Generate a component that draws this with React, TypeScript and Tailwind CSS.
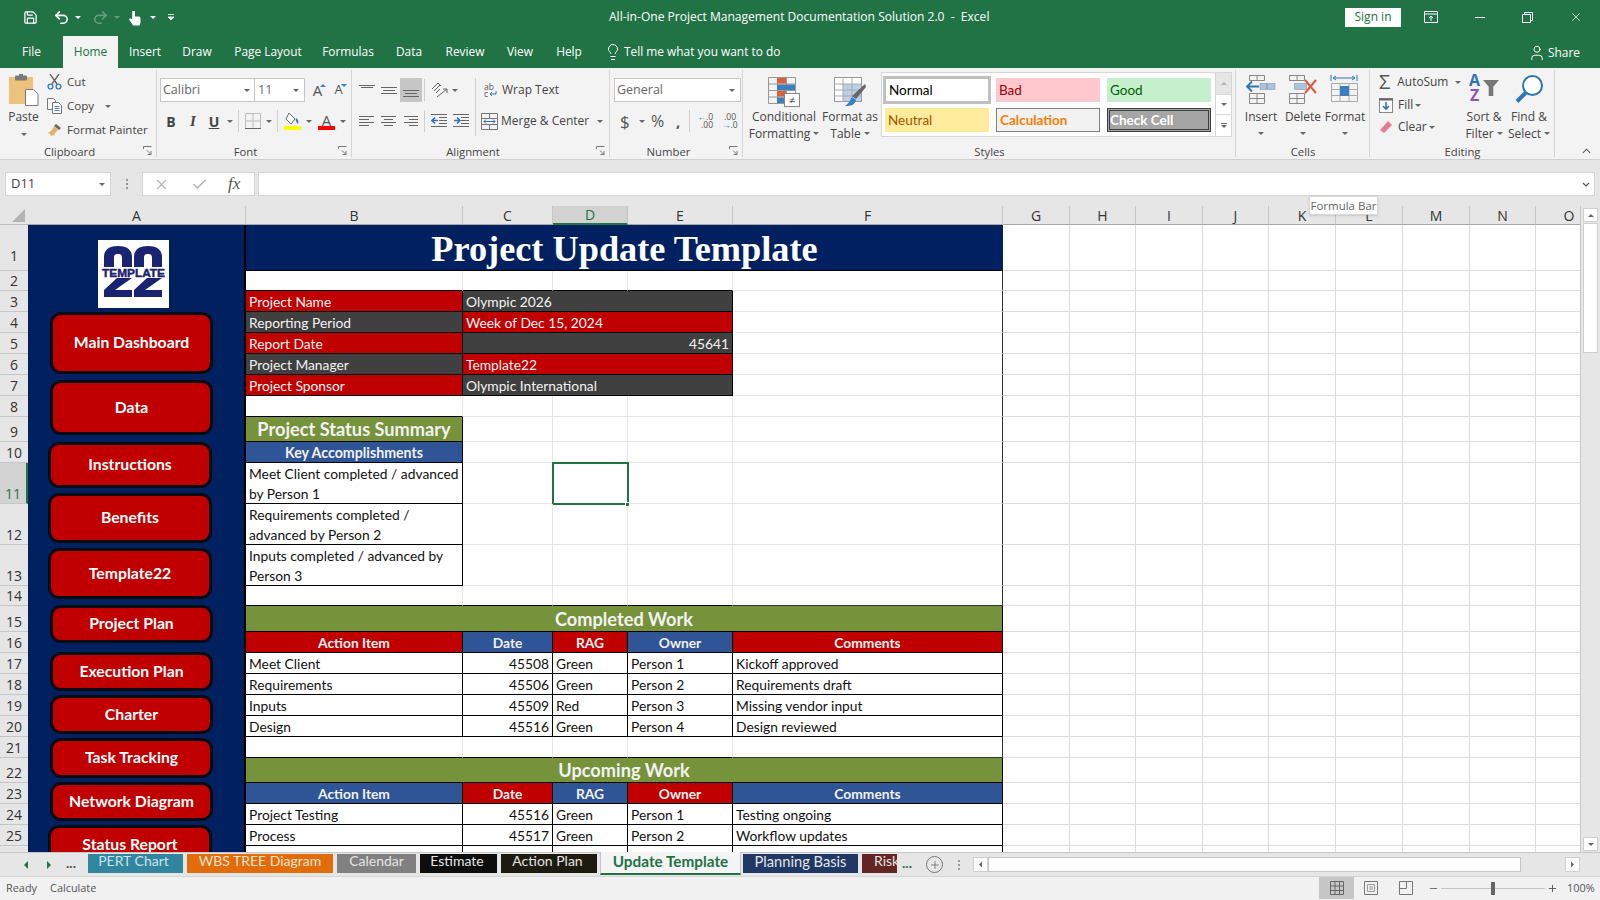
import { ReactNode } from "react";
import { Save, Undo2, Redo2, Lightbulb, User, X, Check, Minus, Plus } from "lucide-react";

const Caret = ({ className = "" }: { className?: string }) => (
  <svg viewBox="0 0 6 3" className={`w-[6px] h-[3px] shrink-0 ${className}`}>
    <path d="M0 0h6L3 3z" fill="#666" />
  </svg>
);

const Expander = () => (
  <svg viewBox="0 0 9 9" className="absolute right-[5px] bottom-[4px] w-[9px] h-[9px]">
    <path d="M.5 3V.5H8.5M8 8.5L4 4.5M8 5v3.5H4.5" fill="none" stroke="#777" strokeWidth="1" />
  </svg>
);

function Group({ label, w, children, labelPad = "" }: { label: string; w: string; children: ReactNode; labelPad?: string }) {
  return (
    <div className={`relative flex flex-col shrink-0 h-full ${w}`}>
      <div className="flex-1 flex min-h-0">{children}</div>
      <div className={`h-[16px] leading-[17px] text-center text-[11.3px] text-[#444] ${labelPad}`}>{label}</div>
      <div className="absolute right-0 top-[2px] bottom-[2px] w-px bg-[#d6d6d6]" />
      {["Clipboard", "Font", "Alignment", "Number"].includes(label) && <Expander />}
    </div>
  );
}

const Lines = ({ rows }: { rows: [number, number, number][] }) => (
  <svg viewBox="0 0 16 16" className="w-[16px] h-[16px]">
    {rows.map(([a, b, y]) => (
      <path key={y} d={`M${a} ${y + 0.5}H${b}`} stroke="#666" strokeWidth="1" />
    ))}
  </svg>
);

const IconBox = ({ children, className = "" }: { children: ReactNode; className?: string }) => (
  <div className={`w-[22px] h-[24px] flex items-center justify-center shrink-0 ${className}`}>{children}</div>
);

const VSep = ({ className = "" }: { className?: string }) => <div className={`w-px h-[22px] bg-[#d0d0d0] shrink-0 ${className}`} />;

function PasteIcon() {
  return (
    <svg viewBox="0 0 30 32" className="w-[30px] h-[32px]">
      <rect x="0" y="3" width="24" height="27" fill="#edc27c" />
      <rect x="6" y="1.5" width="12" height="5" rx="1" fill="#7a7a7a" />
      <rect x="10" y="0" width="4" height="3" fill="#7a7a7a" />
      <path d="M16.5 15.5h8l4.5 4.5v11.5h-12.5z" fill="#fff" stroke="#7a7a7a" />
    </svg>
  );
}

function CutIcon() {
  return (
    <svg viewBox="0 0 15 16" className="w-[15px] h-[16px]">
      <path d="M3 0l7 10M12 0L5 10" stroke="#666" strokeWidth="1.4" fill="none" />
      <circle cx="3.5" cy="12.5" r="2.4" fill="none" stroke="#3c7fc0" strokeWidth="1.4" />
      <circle cx="11.5" cy="12.5" r="2.4" fill="none" stroke="#3c7fc0" strokeWidth="1.4" />
    </svg>
  );
}

function CopyIcon() {
  return (
    <svg viewBox="0 0 15 16" className="w-[15px] h-[16px]">
      <path d="M.5.5h6l2 2v9h-8z" fill="#fff" stroke="#777" />
      <path d="M5.5 4.5h6l3 3v8h-9z" fill="#fff" stroke="#777" />
      <path d="M7.5 8.5h5M7.5 10.5h5M7.5 12.5h5" stroke="#4a86c5" />
    </svg>
  );
}

function PainterIcon() {
  return (
    <svg viewBox="0 0 15 15" className="w-[15px] h-[15px]">
      <path d="M9 1l5 4-2 2-5-4z" fill="#666" />
      <path d="M7 3l4 4-3 3-1 3-1-1-2 1-1-2-2-1 4-3z" fill="#e0b468" />
    </svg>
  );
}

function GrowA({ down }: { down?: boolean }) {
  return (
    <div className="relative w-[21px] h-[24px] flex items-center justify-center">
      <span className={`text-[#555] ${down ? "text-[13px]" : "text-[15px]"}`}>A</span>
      <svg viewBox="0 0 6 3" className="absolute right-[2px] top-[6px] w-[6px] h-[3px]">
        <path d={down ? "M0 0h6L3 3z" : "M0 3h6L3 0z"} fill="#3c7fc0" />
      </svg>
    </div>
  );
}

function Font() {
  return (
    <Group label="Font" w="w-[195px]" labelPad="pr-[18px]">
      <div className="flex flex-col pt-[10px] pl-[3px] gap-[7px] text-[#444]">
        <div className="flex items-center h-[24px]">
          <div className="w-[95px] h-[24px] bg-white border border-[#c6c6c6] flex items-center justify-between px-[2px] text-[12.5px] text-[#666]">
            Calibri
            <Caret className="mr-[2px]" />
          </div>
          <div className="w-[50px] h-[24px] bg-white border border-l-0 border-[#c6c6c6] flex items-center justify-between px-[3px] text-[12.5px] text-[#666]">
            11
            <Caret className="mr-[2px]" />
          </div>
          <div className="flex ml-[2px]">
            <GrowA />
            <GrowA down />
          </div>
        </div>
        <div className="flex items-center h-[24px]">
          <IconBox><span className="font-bold text-[14px]">B</span></IconBox>
          <IconBox><span className="italic font-['Liberation_Serif',serif] font-bold text-[15px]">I</span></IconBox>
          <IconBox className="-ml-[1px]"><span className="underline font-bold text-[14px]">U</span></IconBox>
          <Caret className="ml-[2px]" />
          <VSep className="ml-[5px]" />
          <svg viewBox="0 0 16 16" className="w-[16px] h-[16px] ml-[6px]">
            <path d="M.5.5h15v15H.5zM8 .5v15M.5 8h15" fill="none" stroke="#bdbdbd" />
            <path d="M0 15.5h16" stroke="#666" />
          </svg>
          <Caret className="ml-[5px]" />
          <VSep className="ml-[5px]" />
          <svg viewBox="0 0 17 18" className="w-[17px] h-[18px] ml-[6px]">
            <path d="M5 1l6 6-4 5-5-5z" fill="#fff" stroke="#666" />
            <path d="M12 6c2 1 3 3 2 6-1-1-3-3-2-6z" fill="#3c7fc0" />
            <rect x="0" y="14" width="17" height="4" fill="#ffff00" />
          </svg>
          <Caret className="ml-[5px]" />
          <div className="relative w-[17px] h-[18px] ml-[6px]">
            <span className="absolute left-0 right-0 -top-[3px] text-center text-[15px] text-[#555]">A</span>
            <div className="absolute left-0 right-0 bottom-0 h-[4px] bg-[#ff0000]" />
          </div>
          <Caret className="ml-[5px]" />
        </div>
      </div>
    </Group>
  );
}

function Alignment() {
  return (
    <Group label="Alignment" w="w-[258px]" labelPad="pr-[16px]">
      <div className="flex">
        <div className="w-[123px] flex flex-col pt-[10px] pl-[4px] gap-[7px]">
          <div className="flex items-center h-[24px]">
            <IconBox><Lines rows={[[0, 16, 3], [2, 14, 5]]} /></IconBox>
            <IconBox><Lines rows={[[0, 16, 5], [2, 14, 8], [0, 16, 11]]} /></IconBox>
            <IconBox className="bg-[#c6c6c6]"><Lines rows={[[0, 16, 8], [2, 14, 11], [0, 16, 14]]} /></IconBox>
            <VSep className="ml-[2px]" />
            <svg viewBox="0 0 18 18" className="w-[18px] h-[18px] ml-[6px]">
              <path d="M1 8l6-6 3 3M3 10l6-6M5 12l4-4" fill="none" stroke="#666" />
              <path d="M6 16l10-8M16 8h-4M16 8v4" fill="none" stroke="#666" />
            </svg>
            <Caret className="ml-[3px]" />
          </div>
          <div className="flex items-center h-[24px]">
            <IconBox><Lines rows={[[0, 15, 3], [0, 10, 6], [0, 15, 9], [0, 10, 12]]} /></IconBox>
            <IconBox><Lines rows={[[0, 15, 3], [3, 12, 6], [0, 15, 9], [3, 12, 12]]} /></IconBox>
            <IconBox><Lines rows={[[1, 15, 3], [6, 15, 6], [1, 15, 9], [6, 15, 12]]} /></IconBox>
            <VSep className="ml-[2px]" />
            <svg viewBox="0 0 16 16" className="w-[16px] h-[16px] ml-[6px]">
              <path d="M0 1.5h16M8 4.5h8M8 7.5h8M8 10.5h8M0 13.5h16" stroke="#666" />
              <path d="M7 7.5H1M4 4.5l-3 3 3 3" fill="none" stroke="#2e75b6" strokeWidth="1.6" />
            </svg>
            <svg viewBox="0 0 16 16" className="w-[16px] h-[16px] ml-[6px]">
              <path d="M0 1.5h16M8 4.5h8M8 7.5h8M8 10.5h8M0 13.5h16" stroke="#666" />
              <path d="M1 7.5h6M4 4.5l3 3-3 3" fill="none" stroke="#2e75b6" strokeWidth="1.6" />
            </svg>
          </div>
        </div>
        <VSep className="h-[58px] mt-[10px]" />
        <div className="flex flex-col pt-[10px] gap-[7px]">
          <div className="flex items-center h-[24px] pl-[8px] gap-[5px]">
            <svg viewBox="0 0 13 16" className="w-[13px] h-[16px]">
              <text x="0" y="7.500" fontSize="8.5" fill="#555">ab</text>
              <text x="0" y="15" fontSize="8.5" fill="#555">c</text>
              <path d="M12 9v3H6M8 10l-2 2 2 2" fill="none" stroke="#2e75b6" />
            </svg>
            <span className="text-[12px] text-[#444]">Wrap Text</span>
          </div>
          <div className="flex items-center h-[24px] pl-[5px]">
            <svg viewBox="0 0 17 17" className="w-[17px] h-[17px]">
              <path d="M.5.5h16v16H.5zM.5 5.5h16M.5 11.5h16M8.5.5v5M8.5 11.5v5" fill="none" stroke="#777" />
              <path d="M3 8.5h11M5 6.5l-2 2 2 2M12 6.5l2 2-2 2" fill="none" stroke="#2e75b6" />
            </svg>
            <span className="text-[12px] text-[#444] ml-[3px]">Merge &amp; Center</span>
            <Caret className="ml-[8px]" />
          </div>
        </div>
      </div>
    </Group>
  );
}

function NumberGroup() {
  return (
    <Group label="Number" w="w-[133px]" labelPad="pr-[16px]">
      <div className="flex flex-col pt-[10px] pl-[4px] gap-[7px]">
        <div className="w-[127px] h-[24px] bg-white border border-[#c6c6c6] flex items-center justify-between px-[2px] text-[12.5px] text-[#666]">
          General
          <Caret className="mr-[3px]" />
        </div>
        <div className="flex items-center h-[24px] text-[#555]">
          <span className="ml-[6px] w-[12px] text-[17px] leading-none">$</span>
          <Caret className="ml-[7px]" />
          <span className="ml-[6px] w-[17px] text-[16px] leading-none">%</span>
          <span className="ml-[8px] w-[8px] font-bold text-[15px] leading-none">,</span>
          <VSep className="ml-[5px]" />
          <div className="ml-[7px] w-[16px] leading-[8px] text-[8.5px] text-right">
            <span className="text-[#2e75b6]">←</span>.0
            <br />
            .00
          </div>
          <div className="ml-[9px] w-[14px] leading-[8px] text-[8.5px] text-right">
            .00
            <br />
            <span className="text-[#2e75b6]">→</span>.0
          </div>
        </div>
      </div>
    </Group>
  );
}

function CondIcon() {
  return (
    <svg viewBox="0 0 32 30" className="w-[32px] h-[30px]">
      <path d="M.5.5h27v26H.5zM9.5.5v26M18.5.5v26M.5 7h27M.5 13.5h27M.5 20h27" fill="none" stroke="#999" />
      <rect x="9" y="1" width="9" height="5.5" fill="#d9603b" />
      <rect x="9" y="7.5" width="18" height="5.5" fill="#3c7fc0" />
      <rect x="9" y="14" width="9" height="5.5" fill="#d9603b" />
      <rect x="9" y="20.5" width="9" height="5.5" fill="#3c7fc0" />
      <rect x="16.5" y="16.5" width="15" height="13" fill="#fff" stroke="#888" />
      <text x="24" y="27" textAnchor="middle" fontSize="11" fill="#444">≠</text>
    </svg>
  );
}

function TableIcon() {
  return (
    <svg viewBox="0 0 32 30" className="w-[32px] h-[30px]">
      <rect x=".5" y=".5" width="27" height="24" fill="#fff" stroke="#999" />
      <rect x="9" y="7" width="18" height="17" fill="#bcd0e8" />
      <path d="M.5 7h27M.5 13h27M.5 19h27M9 .5v24M18 .5v24" stroke="#aaa" fill="none" />
      <path d="M31 7l1 3-10 12-4-3z" fill="#666" />
      <path d="M18 20l4 3c-1 5-5 6-11 6 3-2 5-5 7-9z" fill="#3c7fc0" />
    </svg>
  );
}

const styleCells = [
  ["Normal", "pl-[3px] bg-white border-[3px] border-[#c0c0c0] text-black -m-[2px] text-[13.5px]"],
  ["Bad", "pl-[3px] bg-[#ffc7ce] text-[#9c0006]"],
  ["Good", "pl-[3px] bg-[#c6efce] text-[#006100]"],
  ["Neutral", "pl-[3px] bg-[#ffeb9c] text-[#9c5700]"],
  ["Calculation", "pl-[3px] bg-[#f2f2f2] border border-[#7f7f7f] text-[#fa7d00] font-bold"],
  ["Check Cell", "bg-[#a5a5a5] border-[3px] border-double border-[#3f3f3f] text-white font-bold"],
];

function Styles() {
  return (
    <Group label="Styles" w="w-[493px]">
      <div className="flex">
        <div className="w-[7px]" />
        <div className="w-[68px] pt-[9px] flex flex-col items-center text-[12px] leading-[17px] text-[#444]">
          <CondIcon />
          <div className="mt-[1px]">Conditional</div>
          <div className="flex items-center gap-[3px]">Formatting<Caret /></div>
        </div>
        <div className="w-[54px] pt-[9px] flex flex-col items-center text-[12px] leading-[17px] text-[#444] ml-[5px] whitespace-nowrap">
          <TableIcon />
          <div className="mt-[1px]">Format as</div>
          <div className="flex items-center gap-[3px]">Table<Caret /></div>
        </div>
        <div className="ml-[4px] mt-[4px] w-[351px] h-[65px] bg-white border border-[#d6d6d6] flex">
          <div className="flex-1 grid grid-cols-[104px_104px_104px] grid-rows-[24px_24px] gap-x-[7px] gap-y-[6px] pt-[5px] pl-[3px] font-['Lato',sans-serif] text-[13.5px]">
            {styleCells.map(([name, cls]) => (
              <div key={name} className={`flex items-center ${cls}`}>{name}</div>
            ))}
          </div>
          <div className="w-[16px] flex flex-col border-l border-[#d6d6d6]">
            <div className="h-[22px] bg-[#e6e6e6] flex items-center justify-center border-b border-[#d6d6d6]">
              <Caret className="rotate-180 opacity-40" />
            </div>
            <div className="h-[20px] flex items-center justify-center border-b border-[#d6d6d6]"><Caret /></div>
            <div className="flex-1 flex flex-col items-center justify-center gap-[1px]">
              <div className="w-[6px] h-px bg-[#666]" />
              <Caret />
            </div>
          </div>
        </div>
      </div>
    </Group>
  );
}

function InsertIcon() {
  return (
    <svg viewBox="0 0 30 30" className="w-[30px] h-[30px]">
      <path d="M3.5.5h15v5h-15zM11 .5v5M3.5 18.5h15v10h-15zM11 18.5v10M3.5 23.5h15" fill="none" stroke="#888" />
      <rect x="14" y="8.5" width="15" height="6" fill="#a8c4e0" stroke="#88a" strokeWidth=".5" />
      <path d="M21 8.5v6" stroke="#888" />
      <path d="M13 11.5H1M6 6.5l-5 5 5 5" fill="none" stroke="#2e75b6" strokeWidth="1.8" />
    </svg>
  );
}

function DeleteIcon() {
  return (
    <svg viewBox="0 0 30 30" className="w-[30px] h-[30px]">
      <path d="M1.5.5h15v5h-15zM9 .5v5M1.5 18.5h15v10h-15zM9 18.5v10M1.5 23.5h15" fill="none" stroke="#888" />
      <rect x="6.5" y="8.5" width="12" height="6" fill="#a8c4e0" stroke="#888" strokeWidth=".5" />
      <path d="M17 5l11 13M28 5L17 18" stroke="#e0583a" strokeWidth="2" />
    </svg>
  );
}

function FormatIcon() {
  return (
    <svg viewBox="0 0 30 30" className="w-[30px] h-[30px]">
      <path d="M3 3h22M6 1L3 3l3 2M22 1l3 2-3 2M1 0v6M27 0v6" fill="none" stroke="#2e75b6" />
      <path d="M1.5 8.5h26v18h-26zM10 8.5v18M19 8.5v18M1.5 14.5h26M1.5 20.5h26" fill="none" stroke="#aaa" />
      <rect x="10" y="11" width="9" height="10" fill="#3c7fc0" />
    </svg>
  );
}

function Cells() {
  return (
    <Group label="Cells" w="w-[134px]">
      <div className="flex pl-[4px]">
        {[
          ["Insert", <InsertIcon key="i" />],
          ["Delete", <DeleteIcon key="d" />],
          ["Format", <FormatIcon key="f" />],
        ].map(([label, icon]) => (
          <div key={label as string} className="w-[42px] pt-[7px] flex flex-col items-center text-[12px] leading-[17px] text-[#444]">
            {icon}
            <div className="mt-[3px]">{label}</div>
            <Caret className="mt-[7px]" />
          </div>
        ))}
      </div>
    </Group>
  );
}

function Editing() {
  return (
    <Group label="Editing" w="w-[185px]">
      <div className="flex">
        <div className="w-[86px] flex flex-col pt-[2px] pl-[9px] text-[11.9px] text-[#444]">
          <div className="h-[24px] flex items-center">
            <span className="w-[15px] text-[20px] leading-none text-[#555]">Σ</span>
            <span className="ml-[7px]">AutoSum</span>
            <Caret className="ml-[7px]" />
          </div>
          <div className="h-[22px] flex items-center">
            <svg viewBox="0 0 14 15" className="w-[14px] h-[15px]">
              <rect x=".5" y=".5" width="13" height="14" fill="#fff" stroke="#888" />
              <path d="M0 1.5h14" stroke="#666" strokeWidth="2" />
              <path d="M7 4v7M4 8l3 3 3-3" fill="none" stroke="#2e75b6" strokeWidth="1.6" />
            </svg>
            <span className="ml-[5px]">Fill</span>
            <Caret className="ml-[2px]" />
          </div>
          <div className="h-[22px] flex items-center">
            <svg viewBox="0 0 14 14" className="w-[14px] h-[14px]">
              <path d="M9 1l4 4-8 8-4-3z" fill="#e77b93" />
            </svg>
            <span className="ml-[5px]">Clear</span>
            <Caret className="ml-[2px]" />
          </div>
        </div>
        <div className="w-[42px] ml-[7px] pt-[8px] flex flex-col items-center text-[12px] leading-[17px] text-[#444] whitespace-nowrap">
          <div className="relative w-[30px] h-[31px]">
            <span className="absolute left-0 -top-[4px] font-bold text-[16px] text-[#2e75b6]">A</span>
            <span className="absolute left-[1px] top-[11px] font-bold text-[16px] text-[#9052b4]">Z</span>
            <svg viewBox="0 0 14 14" className="absolute right-0 top-[4px] w-[16px] h-[16px]">
              <path d="M0 0h14L9 6v8H5V6z" fill="#777" />
            </svg>
          </div>
          <div className="mt-[1px]">Sort &amp;</div>
          <div className="flex items-center gap-[3px]">Filter<Caret /></div>
        </div>
        <div className="w-[42px] ml-[3px] pt-[6px] flex flex-col items-center text-[12px] leading-[17px] text-[#444] whitespace-nowrap">
          <svg viewBox="0 0 30 31" className="w-[30px] h-[31px]">
            <circle cx="18.5" cy="11.5" r="9.5" fill="#fff" stroke="#2e75b6" strokeWidth="2" />
            <path d="M11.5 19L3 27.5" stroke="#2e75b6" strokeWidth="4" />
          </svg>
          <div className="mt-[3px]">Find &amp;</div>
          <div className="flex items-center gap-[3px]">Select<Caret /></div>
        </div>
      </div>
    </Group>
  );
}

function Clipboard() {
  return (
    <Group label="Clipboard" w="w-[157px]" labelPad="pr-[18px]">
      <div className="w-[47px] pt-[6px] flex flex-col items-center text-[12px] leading-[16px] text-[#444]">
        <PasteIcon />
        <div className="mt-[3px]">Paste</div>
        <Caret className="mt-[8px]" />
      </div>
      <div className="flex flex-col pt-[2px] text-[11.6px] text-[#444]">
        <div className="h-[24px] flex items-center gap-[5px]"><CutIcon />Cut</div>
        <div className="h-[24px] flex items-center gap-[5px]"><CopyIcon />Copy<Caret className="ml-[6px]" /></div>
        <div className="h-[24px] flex items-center gap-[5px]"><PainterIcon />Format Painter</div>
      </div>
    </Group>
  );
}

function TitleBar() {
  return (
    <div className="h-[36px] pb-[2px] flex items-center relative text-white">
      <div className="w-[609px] flex items-center pl-[23px]">
        <Save size={15} strokeWidth={2} />
        <Undo2 size={17} strokeWidth={2.2} className="ml-[15px]" />
        <svg viewBox="0 0 6 3" className="w-[6px] h-[3px] ml-[5px]"><path d="M0 0h6L3 3z" fill="#fff" /></svg>
        <Redo2 size={17} strokeWidth={2.2} className="ml-[11px] opacity-30" />
        <svg viewBox="0 0 6 3" className="w-[6px] h-[3px] ml-[5px] opacity-30"><path d="M0 0h6L3 3z" fill="#fff" /></svg>
        <svg viewBox="0 0 14 18" className="w-[13px] h-[17px] ml-[8px]">
          <path d="M4.5 2h3v6h4c1 0 2 1 2 2v4l-1 3.500H5.500L1 11l1.200-1.200 2.300 1.200z" fill="#fff" />
        </svg>
        <svg viewBox="0 0 6 3" className="w-[6px] h-[3px] ml-[9px]"><path d="M0 0h6L3 3z" fill="#fff" /></svg>
        <svg viewBox="0 0 6 6" className="w-[6px] h-[6px] ml-[12px]"><path d="M0 .5h6M0 3h6L3 6z" stroke="#fff" strokeWidth=".8" fill="#fff" /></svg>
      </div>
      <div className="w-[400px] whitespace-pre text-[12.05px]">All-in-One Project Management Documentation Solution 2.0  -  Excel</div>
      <div className="ml-auto flex items-center">
        <div className="w-[56px] h-[19px] bg-white text-[#217346] text-[12px] flex items-center justify-center">Sign in</div>
        <svg viewBox="0 0 14 12" className="w-[14px] h-[12px] ml-[23px]">
          <path d="M.5.5h13v11H.5zM.5 3h13M7 10V5M5 7l2-2 2 2" fill="none" stroke="#fff" />
        </svg>
        <div className="w-[10px] h-px bg-white ml-[37px]" />
        <svg viewBox="0 0 11 11" className="w-[11px] h-[11px] ml-[37px]">
          <path d="M.5 2.5h8v8h-8zM2.5 2.5v-2h8v8h-2" fill="none" stroke="#fff" />
        </svg>
        <X size={14} strokeWidth={1.2} className="ml-[36px] mr-[17px]" />
      </div>
    </div>
  );
}

const tabs = [
  ["File", "w-[63px]"],
  ["Home", "w-[55px] bg-[#f3f3f3] text-[#217346]"],
  ["Insert", "w-[54px]"],
  ["Draw", "w-[50px]"],
  ["Page Layout", "w-[92px]"],
  ["Formulas", "w-[68px]"],
  ["Data", "w-[54px]"],
  ["Review", "w-[58px]"],
  ["View", "w-[52px]"],
  ["Help", "w-[46px]"],
];

function TabRow() {
  return (
    <div className="h-[32px] flex text-white text-[11.9px]">
      {tabs.map(([name, cls]) => (
        <div key={name} className={`h-full flex items-center justify-center shrink-0 pb-[1px] ${cls}`}>{name}</div>
      ))}
      <div className="flex items-center pl-[12px] pb-[1px]">
        <Lightbulb size={18} strokeWidth={1.3} />
        <span className="ml-[2px]">Tell me what you want to do</span>
      </div>
      <div className="ml-auto flex items-center pr-[20px] pt-[2px]">
        <User size={18} strokeWidth={1.3} />
        <span className="ml-[2px]">Share</span>
      </div>
    </div>
  );
}

function Ribbon() {
  return (
    <div className="h-[92px] bg-[#f3f3f3] border-b border-[#d0d0d0] flex">
      <Clipboard />
      <Font />
      <Alignment />
      <NumberGroup />
      <Styles />
      <Cells />
      <Editing />
      <div className="flex-1 relative">
        <svg viewBox="0 0 10 6" className="absolute right-[9px] bottom-[5px] w-[9px] h-[6px]">
          <path d="M1 5l4-4 4 4" fill="none" stroke="#555" strokeWidth="1.2" />
        </svg>
      </div>
    </div>
  );
}

function FormulaBar() {
  return (
    <div className="h-[46px] bg-[#e6e6e6] pt-[12px] relative">
      <div className="flex h-[24px] pl-[5px] pr-[5px] text-[#444] text-[13px]">
        <div className="w-[106px] bg-white border border-[#d4d4d4] flex items-center justify-between px-[5px]">
          D11
          <Caret />
        </div>
        <div className="w-[31px] flex flex-col items-center justify-center gap-[2px]">
          <div className="w-[2px] h-[2px] bg-[#999]" />
          <div className="w-[2px] h-[2px] bg-[#999]" />
          <div className="w-[2px] h-[2px] bg-[#999]" />
        </div>
        <div className="w-[113px] bg-white border border-[#d4d4d4] flex items-center pl-[10px]">
          <X size={17} strokeWidth={1.6} className="text-[#b4b4b4]" />
          <Check size={17} strokeWidth={2.2} className="text-[#b4b4b4] ml-[21px]" />
          <span className="ml-[20px] italic font-['Liberation_Serif',serif] text-[17px] text-[#555]">fx</span>
        </div>
        <div className="flex-1 ml-[3px] bg-white border border-[#d4d4d4] flex items-center justify-end pr-[4px]">
          <svg viewBox="0 0 8 5" className="w-[8px] h-[5px]"><path d="M1 1l3 3 3-3" fill="none" stroke="#555" strokeWidth="1.2" /></svg>
        </div>
      </div>
      <div className="absolute left-[1309px] top-[36px] w-[69px] h-[19px] z-10 bg-white border border-[#d8d8d8] shadow-sm text-[11.5px] text-[#666] flex items-center justify-center whitespace-nowrap">
        Formula Bar
      </div>
    </div>
  );
}

const BLANK = "border-r border-b border-[#e6e6e6]";
const RIGHT_EDGE = "border-r border-b border-r-[#333] border-b-[#e6e6e6]";
const BOX = "border-r border-b border-black flex items-center px-[3px] pt-[2px] whitespace-nowrap overflow-hidden";
const RED = "bg-[#c00000] text-[#f5f5f5]";
const DARK = "bg-[#404040] text-[#f2f2f2]";
const GREEN = "bg-[#76933c] text-[#f2f2f2] font-bold justify-center text-[18.2px]";
const BLUE_H = "bg-[#2f5597] text-[#f2f2f2] font-bold justify-center";
const RED_H = "bg-[#c00000] text-[#f2f2f2] font-bold justify-center";
const ABOVE = "border-r border-b border-r-[#e6e6e6] border-b-black";

type Cell = { cls: string; text?: string };

const blanks = (n: number, extra = BLANK): Cell[] => Array.from({ length: n }, () => ({ cls: extra }));

const dataRow = (a: string, date: string, rag: string, owner: string, note: string): Cell[] => [
  { cls: `${BOX} text-[#111]`, text: a },
  { cls: `${BOX} text-[#111] justify-end`, text: date },
  { cls: `${BOX} text-[#111]`, text: rag },
  { cls: `${BOX} text-[#111]`, text: owner },
  { cls: `${BOX} text-[#111]`, text: note },
];

const headRow = (first: string, second: string): Cell[] => [
  { cls: `${BOX} ${first}`, text: "Action Item" },
  { cls: `${BOX} ${second}`, text: "Date" },
  { cls: `${BOX} ${first}`, text: "RAG" },
  { cls: `${BOX} ${second}`, text: "Owner" },
  { cls: `${BOX} ${first}`, text: "Comments" },
];

const info = (label: string, value: string, swap: boolean, right?: boolean): Cell[] => [
  { cls: `${BOX} ${swap ? DARK : RED}`, text: label },
  { cls: `${BOX} col-span-3 ${swap ? RED : DARK} ${right ? "justify-end" : ""}`, text: value },
  { cls: RIGHT_EDGE },
];

const wrapCell = (text: string): Cell => ({
  cls: "border-r border-b border-black px-[3px] pt-[1px] leading-[20px] text-[#111] whitespace-normal",
  text,
});

const sheetRows: Cell[][] = [
  [{ cls: "col-span-5 bg-[#002060] border-b border-black flex items-center justify-center pt-[4px] text-white font-bold font-['Liberation_Serif',serif] text-[36.3px] leading-none", text: "Project Update Template" }],
  [...blanks(4, ABOVE), { cls: RIGHT_EDGE }],
  info("Project Name", "Olympic 2026", false),
  info("Reporting Period", "Week of Dec 15, 2024", true),
  info("Report Date", "45641", false, true),
  info("Project Manager", "Template22", true),
  info("Project Sponsor", "Olympic International", false),
  [{ cls: ABOVE }, ...blanks(3), { cls: RIGHT_EDGE }],
  [{ cls: `${BOX} ${GREEN}`, text: "Project Status Summary" }, ...blanks(3), { cls: RIGHT_EDGE }],
  [{ cls: `${BOX} ${BLUE_H} text-[14.2px]`, text: "Key Accomplishments" }, ...blanks(3), { cls: RIGHT_EDGE }],
  [wrapCell("Meet Client completed / advanced by Person 1"), blanks(1)[0], { cls: "border-2 border-[#217346] -m-px" }, blanks(1)[0], { cls: RIGHT_EDGE }],
  [wrapCell("Requirements completed / advanced by Person 2"), ...blanks(3), { cls: RIGHT_EDGE }],
  [wrapCell("Inputs completed / advanced by Person 3"), ...blanks(3), { cls: RIGHT_EDGE }],
  [...blanks(4, ABOVE), { cls: "border-r border-b border-[#333]" }],
  [{ cls: `${BOX} col-span-5 ${GREEN}`, text: "Completed Work" }],
  headRow(RED_H, BLUE_H),
  dataRow("Meet Client", "45508", "Green", "Person 1", "Kickoff approved"),
  dataRow("Requirements", "45506", "Green", "Person 2", "Requirements draft"),
  dataRow("Inputs", "45509", "Red", "Person 3", "Missing vendor input"),
  dataRow("Design", "45516", "Green", "Person 4", "Design reviewed"),
  [...blanks(4, ABOVE), { cls: "border-r border-b border-[#333]" }],
  [{ cls: `${BOX} col-span-5 ${GREEN}`, text: "Upcoming Work" }],
  headRow(BLUE_H, RED_H),
  dataRow("Project Testing", "45516", "Green", "Person 1", "Testing ongoing"),
  dataRow("Process", "45517", "Green", "Person 2", "Workflow updates"),
  dataRow("", "", "", "", ""),
];

const navButtons = [
  ["Main Dashboard", "ml-[22px] w-[163px] mt-[4px] h-[62px] pb-[2px]"],
  ["Data", "ml-[22px] w-[163px] mt-[6px] h-[55px] pb-[2px]"],
  ["Instructions", "ml-[20px] w-[164px] mt-[7px] h-[46px] pb-[2px]"],
  ["Benefits", "ml-[20px] w-[164px] mt-[5px] h-[50px] pb-[2px]"],
  ["Template22", "ml-[20px] w-[164px] mt-[5px] h-[51px] pb-[2px]"],
  ["Project Plan", "ml-[22px] w-[163px] mt-[6px] h-[38px] pb-[2px]"],
  ["Execution Plan", "ml-[22px] w-[163px] mt-[9px] h-[39px] pb-[2px]"],
  ["Charter", "ml-[22px] w-[163px] mt-[4px] h-[39px] pb-[2px]"],
  ["Task Tracking", "ml-[22px] w-[163px] mt-[4px] h-[40px] pb-[2px]"],
  ["Network Diagram", "ml-[22px] w-[163px] mt-[4px] h-[39px] pb-[2px]"],
  ["Status Report", "ml-[20px] w-[164px] mt-[4px] h-[50px] items-start pt-[4px]"],
];

function Logo() {
  const top = "M0 21V11C0 3 6 0 14 0s14 3 14 11v10H18V12c0-3-1-4-4-4s-4 1-4 4v9z";
  const bottom = "M13 0h15L11 12h17v7H0v-7z";
  return (
    <div className="ml-[70px] mt-[15px] w-[71px] h-[68px] bg-white shrink-0">
      <svg viewBox="0 0 71 68" className="w-[71px] h-[68px]">
        <g fill="#1a2272">
          <path d={top} transform="translate(6 6)" />
          <path d={top} transform="translate(36 6)" />
          <path d={bottom} transform="translate(6 38)" />
          <path d={bottom} transform="translate(36 38)" />
        </g>
        <text x="35.5" y="36.500" textAnchor="middle" textLength="63" lengthAdjust="spacingAndGlyphs" fontSize="10.500" fontWeight="700" fill="#1a2272" stroke="#1a2272" strokeWidth=".4" fontFamily="'Liberation Sans', sans-serif">TEMPLATE</text>
      </svg>
    </div>
  );
}

function Sidebar() {
  return (
    <div className="col-start-2 row-start-2 row-span-26 bg-[#002060] border-r-2 border-black flex flex-col overflow-hidden">
      <Logo />
      {navButtons.map(([name, cls]) => (
        <div
          key={name}
          className={`shrink-0 bg-[#c00000] border-[3px] border-[#0a0a14] rounded-[11px] flex justify-center items-center text-white font-bold text-[15.75px] ${cls}`}
        >
          {name}
        </div>
      ))}
    </div>
  );
}

const columnHeads = ["A", "B", "C", "D", "E", "F", "G", "H", "I", "J", "K", "L", "M", "N", "O"];

function Sheet() {
  return (
    <div className="flex h-[646px]">
      <div className="w-[1580px] overflow-hidden bg-white">
        <div className="w-[1603px] grid grid-cols-[28px_218px_217px_90px_75px_105px_270px_67px_66px_67px_66px_67px_67px_67px_66px_67px] grid-rows-[19px_46px_20px_21px_21px_21px_21px_21px_21px_25px_21px_41px_41px_41px_20px_26px_21px_21px_21px_21px_21px_21px_25px_21px_21px_21px_22px] font-['Lato',sans-serif] text-[13.8px] relative">
          <div className="bg-[#e6e6e6] border-b border-[#bbb] flex items-end justify-end pr-[3px] pb-[2px]">
            <div className="w-0 h-0 border-l-[13px] border-l-transparent border-b-[13px] border-b-[#b4b4b4]" />
          </div>
          {columnHeads.map((c) => (
            <div
              key={c}
              className={`font-['Open_Sans',sans-serif] text-[14px] border-r border-[#c6c6c6] flex items-center justify-center ${
                c === "D" ? "bg-[#d2d2d2] text-[#217346] border-b-2 border-b-[#217346]" : "bg-[#e6e6e6] text-[#333] border-b border-b-[#a8a8a8]"
              }`}
            >
              {c}
            </div>
          ))}
          <Sidebar />
          {sheetRows.map((cells, i) => (
            <SheetRow key={i} index={i + 1} cells={cells} />
          ))}
          <div className="absolute left-[625px] top-[296px] w-[5px] h-[5px] bg-[#217346] border border-white z-10" />
        </div>
      </div>
      <div className="w-[20px] bg-[#e6e6e6] flex flex-col items-center pt-[2px] border-l border-[#c6c6c6]">
        <div className="w-[15px] h-[14px] bg-white border border-[#d0d0d0] flex items-center justify-center"><Caret className="rotate-180" /></div>
        <div className="w-[15px] h-[130px] bg-white border border-[#d0d0d0] mt-[1px]" />
        <div className="w-[15px] h-[14px] bg-white border border-[#d0d0d0] mt-auto mb-[1px] flex items-center justify-center"><Caret /></div>
      </div>
    </div>
  );
}

function SheetRow({ index, cells }: { index: number; cells: Cell[] }) {
  return (
    <>
      <div
        className={`col-start-1 font-['Open_Sans',sans-serif] text-[14px] border-b border-[#c6c6c6] flex items-end justify-center leading-[18px] ${
          index === 1 ? "pb-[5px]" : ""
        } ${index === 11 ? "bg-[#d2d2d2] text-[#217346] border-r-2 border-r-[#217346]" : "bg-[#e6e6e6] text-[#333]"}`}
      >
        {index < 26 ? index : ""}
      </div>
      {cells.map((c, i) => (
        <div key={i} className={c.cls}>{c.text}</div>
      ))}
      {Array.from({ length: 9 }, (_, i) => (
        <div key={`g${i}`} className="border-r border-b border-[#dcdcdc]" />
      ))}
    </>
  );
}

const sheetTabs = [
  ["PERT Chart", "w-[95px] pr-[4px] bg-[#31859c] text-[#c8e4ec]"],
  ["WBS TREE Diagram", "w-[146px] bg-[#e36c0a] text-[#fbe4d0]"],
  ["Calendar", "w-[79px] bg-[#808080] text-[#e4e4e4]"],
  ["Estimate", "w-[77px] pr-[3px] bg-[#0d0d0d] text-[#e4e4e4]"],
  ["Action Plan", "w-[96px] pr-[3px] bg-[#1d1b10] text-[#e4e4e4]"],
];

function TabBar() {
  return (
    <div className="h-[24px] bg-[#e6e6e6] flex font-['Lato',sans-serif] text-[14px] border-t border-[#c6c6c6]">
      <div className="w-[88px] shrink-0 flex items-center text-[#217346]">
        <svg viewBox="0 0 4 8" className="w-[4px] h-[8px] ml-[24px]"><path d="M4 0v8L0 4z" fill="#217346" /></svg>
        <svg viewBox="0 0 4 8" className="w-[4px] h-[8px] ml-[19px]"><path d="M0 0v8l4-4z" fill="#217346" /></svg>
        <span className="ml-[15px] mb-[4px] font-bold text-[#555]">...</span>
      </div>
      <div className="flex gap-[4px] pt-[1px]">
        {sheetTabs.map(([name, cls]) => (
          <div key={name} className={`h-[19px] flex justify-center leading-[14px] shrink-0 ${cls}`}>{name}</div>
        ))}
      </div>
      <div className="w-[141px] ml-[3px] h-[23px] -mt-px bg-[#f4f4f4] border-x border-[#c6c6c6] border-b-2 border-b-[#217346] text-[#217346] font-bold text-[15.3px] flex justify-center leading-[18px] shrink-0">
        Update Template
      </div>
      <div className="flex gap-[4px] pt-[1px] ml-[2px]">
        <div className="w-[115px] h-[19px] bg-[#1f3864] text-[#e4e4e4] text-[14.700px] flex justify-center leading-[14px] shrink-0">Planning Basis</div>
        <div className="w-[35px] h-[19px] bg-[#632523] text-[#e4e4e4] leading-[14px] pl-[12px] overflow-hidden shrink-0">Risk</div>
      </div>
      <span className="ml-[5px] mt-[-1px] font-bold text-[#217346] w-[16px]">...</span>
      <div className="ml-[8px] mt-[3px] w-[17px] h-[17px] rounded-full border border-[#777] flex items-center justify-center text-[#666]">
        <Plus size={12} strokeWidth={1.5} />
      </div>
      <div className="ml-[15px] flex flex-col justify-center gap-[2px]">
        <div className="w-[2px] h-[2px] bg-[#999]" />
        <div className="w-[2px] h-[2px] bg-[#999]" />
        <div className="w-[2px] h-[2px] bg-[#999]" />
      </div>
      <div className="ml-[13px] mt-[4px] w-[15px] h-[15px] bg-white border border-[#d0d0d0] flex items-center justify-center">
        <svg viewBox="0 0 4 8" className="w-[3px] h-[7px]"><path d="M4 0v8L0 4z" fill="#666" /></svg>
      </div>
      <div className="mt-[4px] w-[533px] h-[15px] bg-white border border-[#c6c6c6]" />
      <div className="flex-1" />
      <div className="mt-[4px] mr-[20px] w-[15px] h-[15px] bg-white border border-[#d0d0d0] flex items-center justify-center">
        <svg viewBox="0 0 4 8" className="w-[3px] h-[7px]"><path d="M0 0v8l4-4z" fill="#666" /></svg>
      </div>
    </div>
  );
}

function StatusBar() {
  return (
    <div className="h-[24px] pb-[1px] bg-[#f1f1f1] border-t border-[#d6d6d6] flex items-center text-[10.9px] text-[#555]">
      <span className="ml-[6px]">Ready</span>
      <span className="ml-[13px]">Calculate</span>
      <div className="ml-auto flex items-center h-full">
        <div className="w-[35px] h-full bg-[#c6c6c6] flex items-center justify-center">
          <svg viewBox="0 0 14 14" className="w-[14px] h-[14px]">
            <path d="M.5.5h13v13H.5zM5 .5v13M9.5.5v13M.5 5h13M.5 9.5h13" fill="none" stroke="#666" />
          </svg>
        </div>
        <svg viewBox="0 0 14 14" className="w-[14px] h-[14px] ml-[10px]">
          <path d="M.5.5h13v13H.5z" fill="none" stroke="#777" />
          <path d="M3.5 3.5h7v7h-7zM5 6h4M5 8h4" fill="none" stroke="#999" />
        </svg>
        <svg viewBox="0 0 14 14" className="w-[14px] h-[14px] ml-[21px]">
          <path d="M.5.5h13v13H.5zM7.5.5v7H.5" fill="none" stroke="#777" />
        </svg>
        <Minus size={11} strokeWidth={2} className="ml-[15px] text-[#666]" />
        <div className="relative w-[104px] h-px bg-[#c6c6c6] ml-[2px]">
          <div className="absolute left-[50px] -top-[6px] w-[4px] h-[13px] bg-[#666]" />
        </div>
        <Plus size={11} strokeWidth={2} className="ml-[2px] text-[#555]" />
        <span className="ml-[9px] mr-[7px] w-[26px]">100%</span>
      </div>
    </div>
  );
}

export default function App() {
  return (
    <div className="w-[1600px] h-[900px] overflow-hidden bg-[#e6e6e6] font-['Open_Sans',sans-serif] flex flex-col">
      <div className="h-[68px] bg-[#217346]">
        <TitleBar />
        <TabRow />
      </div>
      <Ribbon />
      <FormulaBar />
      <Sheet />
      <TabBar />
      <StatusBar />
    </div>
  );
}
